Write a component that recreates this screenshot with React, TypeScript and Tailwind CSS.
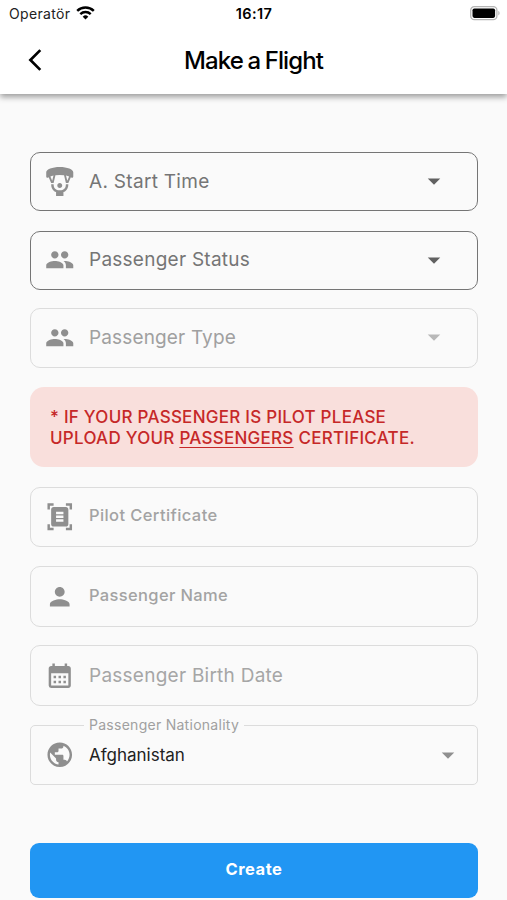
import React from 'react';
import {
  MdArrowBackIosNew,
  MdArrowDropDown,
  MdCalendarMonth,
  MdDocumentScanner,
  MdParagliding,
  MdPeople,
  MdPerson,
  MdPublic,
} from 'react-icons/md';

interface IFieldProps {
  icon: React.ReactNode;
  label: string;
  className: string;
  labelClassName: string;
  arrowClassName?: string;
}

const Field: React.FC<IFieldProps> = (props) => {
  return (
    <div
      className={`flex items-center rounded-[10px] border pl-[14px] pr-[28px] ${props.className}`}
    >
      <div className="w-[30px] shrink-0 text-[29.5px] text-[#8f8f8f]">
        {props.icon}
      </div>
      <div className={`ml-[14px] flex-1 whitespace-nowrap ${props.labelClassName}`}>
        {props.label}
      </div>
      {props.arrowClassName && (
        <MdArrowDropDown className={`mb-[2px] text-[30px] ${props.arrowClassName}`} />
      )}
    </div>
  );
};

const StatusBar: React.FC = () => {
  return (
    <div className="grid h-[27px] grid-cols-3 items-center pl-[9px] pr-[6px] text-black">
      <div className="flex items-center gap-[6px]">
        <span className="text-[14px] tracking-[0.35px] text-[#222]">Operatör</span>
        <svg className="mb-[2px]" width="19" height="14" viewBox="0 0 19 14" fill="none">
          <path d="M1.2 4.8a12 12 0 0 1 16.6 0" stroke="currentColor" strokeWidth="2.5" />
          <path d="M4.3 8.1a7.5 7.5 0 0 1 10.4 0" stroke="currentColor" strokeWidth="2.4" />
          <path d="M6.7 10.7a4 4 0 0 1 5.6 0L9.5 13.5z" fill="currentColor" />
        </svg>
      </div>
      <div className="pr-[2px] text-center text-[14.5px] font-semibold tracking-[0.4px]">
        16:17
      </div>
      <svg className="justify-self-end" width="31" height="15" viewBox="0 0 31 15">
        <rect x="0.7" y="0.7" width="26.2" height="13" rx="3.6" fill="#fff" stroke="#b5b5b5" strokeWidth="1.3" />
        <rect x="2.5" y="2.5" width="22.6" height="9.4" rx="1.8" fill="#000" />
        <path d="M28.3 4.8c1.8.8 1.8 4 0 4.8z" fill="#b5b5b5" />
      </svg>
    </div>
  );
};

export default function App() {
  return (
    <div className="h-[900px] w-[507px] overflow-hidden bg-[#fafafa] font-['Inter',sans-serif]">
      <header className="relative h-[94px] bg-white shadow-[0_3px_6px_rgba(0,0,0,0.38)]">
        <StatusBar />
        <div className="grid h-[66px] grid-cols-[70px_1fr_70px] items-center">
          <MdArrowBackIosNew className="ml-[22px] text-[26px] text-black" />
          <h1 className="pt-px text-center text-[24px] font-medium tracking-[-0.9px] text-black [word-spacing:-1px]">
            Make a Flight
          </h1>
        </div>
      </header>

      <main className="flex flex-col pl-[30px] pr-[29px] pt-[58px]">
        <Field
          icon={<MdParagliding />}
          label="A. Start Time"
          className="h-[59px] border-[#757575]"
          labelClassName="pt-[2px] text-[19px] tracking-[0.3px] text-[#757575]"
          arrowClassName="text-[#616161]"
        />
        <Field
          icon={<MdPeople className="mb-px" />}
          label="Passenger Status"
          className="mt-[20px] h-[59px] border-[#757575]"
          labelClassName="text-[19px] tracking-[0.25px] text-[#757575]"
          arrowClassName="text-[#616161]"
        />
        <Field
          icon={<MdPeople />}
          label="Passenger Type"
          className="mt-[18px] h-[60px] border-[#dcdcdc]"
          labelClassName="text-[19px] tracking-[0.15px] text-[#a0a0a0]"
          arrowClassName="text-[#b8b8b8]"
        />

        <div className="mt-[19px] h-[80px] rounded-[14px] bg-[#f9dfdc] pl-[20px] pt-[20px] text-[17px] font-medium leading-[21px] tracking-[0.26px] text-[#c62828]">
          <p>* IF YOUR PASSENGER IS PILOT PLEASE</p>
          <p>
            UPLOAD YOUR{' '}
            <span className="underline decoration-1 underline-offset-[3px]">PASSENGERS</span>{' '}
            CERTIFICATE.
          </p>
        </div>

        <Field
          icon={<MdDocumentScanner />}
          label="Pilot Certificate"
          className="mt-[20px] h-[60px] border-[#dcdcdc]"
          labelClassName="pb-[4px] text-[16.5px] font-medium tracking-[0.4px] text-[#a3a3a3]"
        />
        <Field
          icon={<MdPerson />}
          label="Passenger Name"
          className="mt-[19px] h-[61px] border-[#dcdcdc]"
          labelClassName="pb-[3px] text-[16.5px] font-medium tracking-[0.35px] text-[#a3a3a3]"
        />
        <Field
          icon={<MdCalendarMonth />}
          label="Passenger Birth Date"
          className="mt-[18px] h-[61px] border-[#dcdcdc]"
          labelClassName="pt-px text-[19px] tracking-[0.25px] text-[#a6a6a6]"
        />

        <div className="relative mt-[19px] flex h-[60px] items-center rounded-[5px] border border-[#dcdcdc] pl-[14px] pr-[14px]">
          <span className="absolute -top-[11px] left-[53px] bg-[#fafafa] px-[5px] text-[14px] leading-[20px] tracking-[0.27px] text-[#a0a0a0]">
            Passenger Nationality
          </span>
          <MdPublic className="text-[29.5px] text-[#8f8f8f]" />
          <div className="ml-[14.5px] flex-1 pt-px text-[17px] text-[#212121]">Afghanistan</div>
          <MdArrowDropDown className="text-[30px] text-[#8f8f8f]" />
        </div>

        <button className="mt-[58px] h-[55px] rounded-[9px] bg-[#2196f3] pb-[2px] text-[16.5px] font-bold tracking-[0.5px] text-white">
          Create
        </button>
      </main>
    </div>
  );
}
